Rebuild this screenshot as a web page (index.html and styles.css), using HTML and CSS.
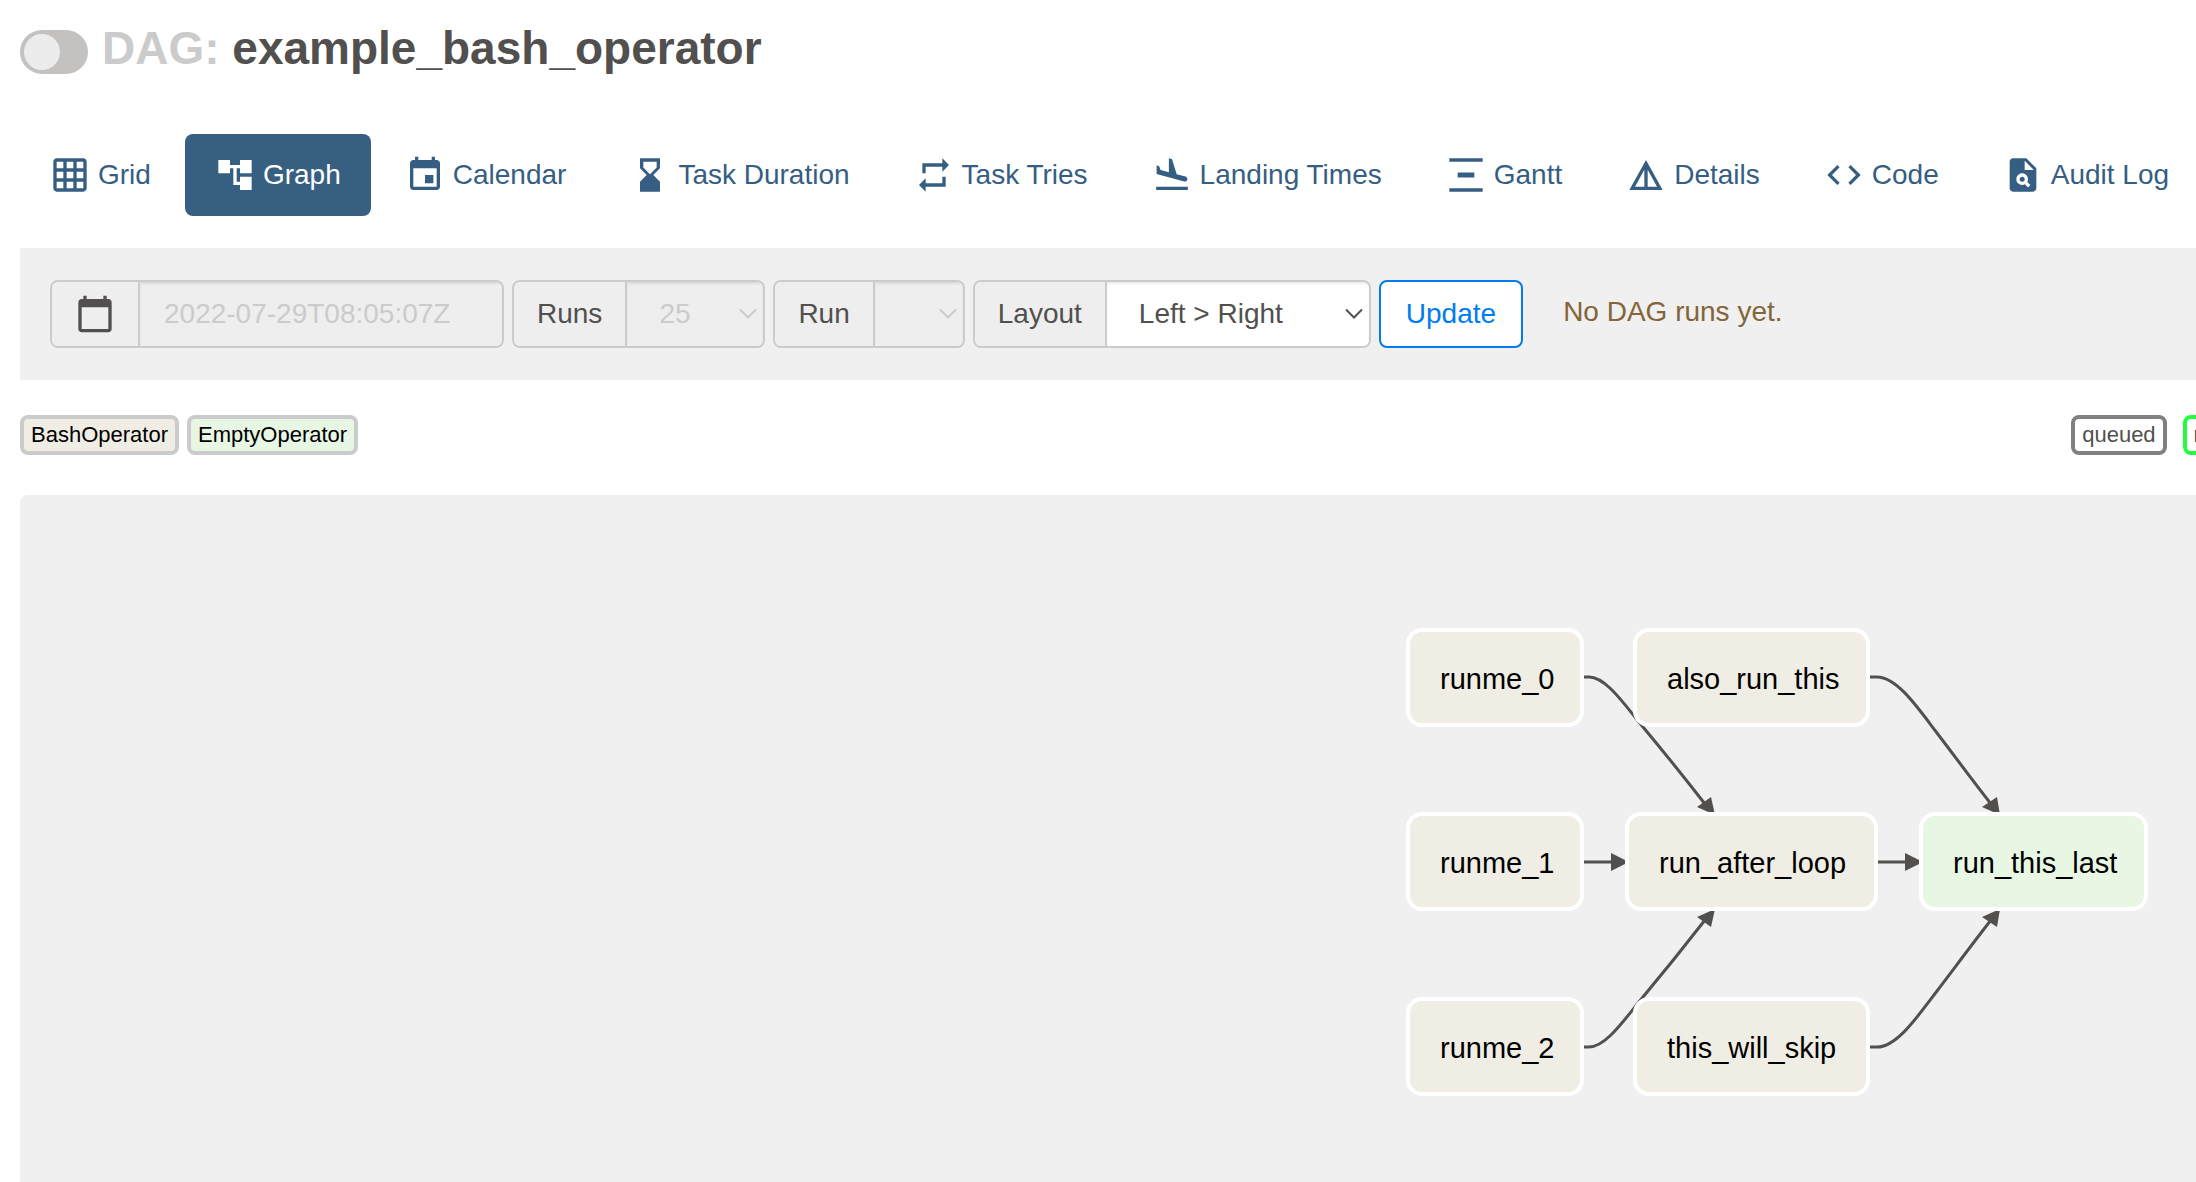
FILE: index.html
```html
<!DOCTYPE html>
<html lang="en">
<head>
<meta charset="utf-8">
<title>example_bash_operator - Graph - Airflow</title>
<link rel="stylesheet" href="styles.css">
</head>
<body>
<main class="page">
  <header class="dag-header">
    <input class="toggle" type="checkbox" id="pause" aria-label="Pause/Unpause DAG">
    <h1 class="dag-title"><span class="dag-title__prefix">DAG:</span> example_bash_operator</h1>
  </header>

  <nav class="tabs">
    <a class="tab" href="#grid"><svg class="icon" viewBox="0 0 24 24"><path d="M20 2H4c-1.1 0-2 .9-2 2v16c0 1.1.9 2 2 2h16c1.1 0 2-.9 2-2V4c0-1.1-.9-2-2-2zM8 20H4v-4h4v4zm0-6H4v-4h4v4zm0-6H4V4h4v4zm6 12h-4v-4h4v4zm0-6h-4v-4h4v4zm0-6h-4V4h4v4zm6 12h-4v-4h4v4zm0-6h-4v-4h4v4zm0-6h-4V4h4v4z"/></svg>Grid</a>
    <a class="tab tab--active" href="#graph"><svg class="icon" viewBox="0 0 24 24"><path d="M22 11V3h-7v3H9V3H2v8h7V8h2v10h4v3h7v-8h-7v3h-2V8h2v3z"/></svg>Graph</a>
    <a class="tab" href="#calendar"><svg class="icon" viewBox="0 0 24 24"><path d="M17 12h-5v5h5v-5zM16 1v2H8V1H6v2H5c-1.11 0-1.99.9-1.99 2L3 19c0 1.1.89 2 2 2h14c1.1 0 2-.9 2-2V5c0-1.1-.9-2-2-2h-1V1h-2zm3 18H5V8h14v11z"/></svg>Calendar</a>
    <a class="tab" href="#duration"><svg class="icon" viewBox="0 0 24 24"><path d="M18 22l-.01-6L14 12l3.99-4.01L18 2H6v6l4 4-4 3.99V22h12zM8 7.5V4h8v3.5l-4 4-4-4z"/></svg>Task Duration</a>
    <a class="tab" href="#tries"><svg class="icon" viewBox="0 0 24 24"><path d="M7 7h10v3l4-4-4-4v3H5v6h2V7zm10 10H7v-3l-4 4 4 4v-3h12v-6h-2v4z"/></svg>Task Tries</a>
    <a class="tab" href="#landing"><svg class="icon" viewBox="0 0 24 24"><path d="M2.5 19h19v2h-19v-2zm16.84-3.15c.8.21 1.62-.26 1.84-1.06.21-.8-.26-1.62-1.06-1.84l-5.31-1.42-2.76-9.02L10.12 2v8.28L5.15 8.95l-.93-2.32-1.45-.39v5.17l16.57 4.44z"/></svg>Landing Times</a>
    <a class="tab" href="#gantt"><svg class="icon" viewBox="0 0 24 24"><path d="M22 2v2H2V2h20zM7 10.5v3h10v-3H7zM2 20v2h20v-2H2z"/></svg>Gantt</a>
    <a class="tab" href="#details"><svg class="icon" viewBox="0 0 24 24"><path fill-rule="evenodd" d="M12 3L2 21h20L12 3zM13 8.92L18.6 19H13V8.92zM11 8.92V19H5.4L11 8.92z"/></svg>Details</a>
    <a class="tab" href="#code"><svg class="icon" viewBox="0 0 24 24"><path d="M9.4 16.6L4.8 12l4.6-4.6L8 6l-6 6 6 6 1.4-1.4zm5.2 0l4.6-4.6-4.6-4.6L16 6l6 6-6 6-1.4-1.4z"/></svg>Code</a>
    <a class="tab" href="#audit"><svg class="icon" viewBox="0 0 24 24"><path fill-rule="evenodd" d="M14 2H6C4.9 2 4 2.9 4 4v16c0 1.1.9 2 2 2h12c1.1 0 2-.9 2-2V8l-6-6zM15.04 19.45l-1.88-1.88c-1.33.71-3.01.53-4.13-.59-1.37-1.37-1.37-3.58 0-4.95s3.58-1.37 4.95 0c1.12 1.12 1.31 2.8.59 4.13l1.88 1.88-1.41 1.41zM13 9V3.500L18.5 9H13z"/><circle cx="11.5" cy="14.5" r="1.500"/></svg>Audit Log</a>
  </nav>

  <form class="toolbar">
    <div class="group">
      <label class="addon" for="base-date" aria-label="Base date"><svg class="icon" viewBox="0 0 24 24"><path d="M20 3h-1V1h-2v2H7V1H5v2H4c-1.1 0-2 .9-2 2v16c0 1.1.9 2 2 2h16c1.100 0 2-.9 2-2V5c0-1.100-.9-2-2-2zm0 18H4V8h16v13z"/></svg></label>
      <input class="control control--date" id="base-date" type="text" value="2022-07-29T08:05:07Z" disabled>
    </div>
    <div class="group">
      <label class="addon" for="runs">Runs</label>
      <select class="control control--select control--runs" id="runs" disabled><option>25</option></select>
    </div>
    <div class="group">
      <label class="addon" for="run">Run</label>
      <select class="control control--select control--run" id="run" disabled><option></option></select>
    </div>
    <div class="group">
      <label class="addon" for="layout">Layout</label>
      <select class="control control--select control--layout" id="layout"><option>Left &gt; Right</option></select>
    </div>
    <button class="update" type="button">Update</button>
    <p class="notice">No DAG runs yet.</p>
  </form>

  <section class="legend">
    <span class="tag tag--bash">BashOperator</span>
    <span class="tag tag--empty">EmptyOperator</span>
    <div class="states">
      <span class="tag tag--queued">queued</span>
      <span class="tag tag--running">running</span>
    </div>
  </section>

  <section class="graph">
    <div class="stage">
      <svg class="edges" viewBox="0 0 742 468">
        <g class="edge">
          <path d="M178 49h5C200 49 218 76 237 99C257 123 278 149 299 176"/>
          <path d="M178 234H208"/>
          <path d="M178 419h5C200 419 218 392 237 369C257 345 278 319 299 292"/>
          <path d="M464 49h7C491 49 512 80 531 105C550 130 567 153 585 176"/>
          <path d="M472 234H502"/>
          <path d="M464 419h7C491 419 512 388 531 363C550 338 567 315 585 292"/>
        </g>
        <g class="arrow">
          <path d="M291 179L305 169L309 187Z"/>
          <path d="M205 225V243L223 234Z"/>
          <path d="M291 289L305 299L309 281Z"/>
          <path d="M576 179L591 169L594 187Z"/>
          <path d="M499 225V243L517 234Z"/>
          <path d="M576 289L591 299L594 281Z"/>
        </g>
      </svg>
      <div class="node" style="left:0;top:0;width:178px">runme_0</div>
      <div class="node" style="left:0;top:184px;width:178px">runme_1</div>
      <div class="node" style="left:0;top:369px;width:178px">runme_2</div>
      <div class="node" style="left:227px;top:0;width:237px">also_run_this</div>
      <div class="node" style="left:219px;top:184px;width:253px">run_after_loop</div>
      <div class="node" style="left:227px;top:369px;width:237px">this_will_skip</div>
      <div class="node node--empty" style="left:513px;top:184px;width:229px">run_this_last</div>
    </div>
  </section>
</main>
</body>
</html>
```
FILE: styles.css
```css
* {
  box-sizing: border-box;
}

body {
  margin: 0;
  background: #fff;
  color: #51504f;
  font: 28px/40px "Liberation Sans", Arial, sans-serif;
  overflow-x: hidden;
}

.page {
  display: flex;
  flex-direction: column;
  min-height: 100vh;
  padding-left: 20px;
}

.dag-header {
  display: flex;
  align-items: center;
  gap: 14px;
  height: 134px;
  padding-bottom: 30px;
}

.toggle {
  appearance: none;
  flex: none;
  width: 68px;
  height: 44px;
  margin: 0;
  padding: 4px;
  border-radius: 22px;
  background: #c4c2c1;
}

.toggle::before {
  content: "";
  display: block;
  width: 36px;
  height: 36px;
  border-radius: 50%;
  background: #edecec;
}

.dag-title {
  margin: 0;
  padding-bottom: 8px;
  font-size: 46px;
  line-height: 56px;
}

.dag-title__prefix {
  color: #cbcbcb;
}

.tabs {
  display: flex;
  gap: 4px;
}

.tab {
  display: flex;
  flex: none;
  align-items: center;
  gap: 8px;
  height: 82px;
  padding: 0 30px;
  border-radius: 8px;
  color: #355e82;
  text-decoration: none;
  white-space: nowrap;
}

.tab--active {
  background: #375f82;
  color: #fff;
}

.icon {
  display: block;
  flex: none;
  width: 40px;
  height: 40px;
  fill: currentColor;
}

.toolbar {
  display: flex;
  align-items: center;
  gap: 8px;
  margin-top: 32px;
  padding: 32px 30px;
  background: #f0f0f0;
}

.group {
  display: flex;
  height: 68px;
  border: 2px solid #cbcbcb;
  border-radius: 8px;
  overflow: hidden;
}

.addon {
  display: flex;
  align-items: center;
  padding: 0 23px;
  border-right: 2px solid #cbcbcb;
  background: #eee;
}

.control {
  appearance: none;
  height: 64px;
  margin: 0;
  padding: 0 24px;
  border: 0;
  border-radius: 0;
  background: #fff;
  box-shadow: inset 0 2px 2px rgba(0, 0, 0, 0.075);
  color: #51504f;
  font: inherit;
  opacity: 1;
}

.control:disabled {
  background-color: #eee;
  color: #cbcbcb;
}

.control--date {
  width: 362px;
}

.control--select {
  padding: 0 32px;
  background-image: url("data:image/svg+xml,%3Csvg xmlns='http://www.w3.org/2000/svg' width='18' height='12'%3E%3Cpath d='M1 1.500L9 9.500L17 1.500' fill='none' stroke='%2351504f' stroke-width='2'/%3E%3C/svg%3E");
  background-position: right 6px center;
  background-repeat: no-repeat;
}

.control--select:disabled {
  background-image: url("data:image/svg+xml,%3Csvg xmlns='http://www.w3.org/2000/svg' width='18' height='12'%3E%3Cpath d='M1 1.500L9 9.500L17 1.500' fill='none' stroke='%23cbcbcb' stroke-width='2'/%3E%3C/svg%3E");
}

.control--runs {
  width: 136px;
}

.control--run {
  width: 88px;
}

.control--layout {
  width: 262px;
}

.update {
  height: 68px;
  padding: 0 25px;
  border: 2px solid #017cee;
  border-radius: 8px;
  background: #fff;
  color: #017cee;
  font: inherit;
}

.notice {
  margin: 0 0 4px 32px;
  color: #836539;
}

.legend {
  display: flex;
  gap: 8px;
  margin: 35px 0 40px;
}

.states {
  display: flex;
  gap: 16px;
  margin-left: auto;
  margin-right: -82px;
}

.tag {
  height: 40px;
  padding: 0 7px;
  border: 4px solid #cbcbcb;
  border-radius: 8px;
  font-size: 22px;
  line-height: 32px;
}

.tag--bash {
  background: #f0ede4;
  color: #000;
}

.tag--empty {
  background: #e8f7e4;
  color: #000;
}

.tag--queued {
  border-color: #808080;
}

.tag--running {
  border-color: #20ff3c;
}

.graph {
  flex: 1;
  padding: 133px 48px 86px 1386px;
  border-radius: 8px 0 0 0;
  background: #f0f0f0;
}

.stage {
  position: relative;
  width: 742px;
  height: 468px;
}

.edges {
  position: absolute;
  inset: 0;
  width: 100%;
  height: 100%;
}

.edge {
  fill: none;
  stroke: #51504f;
  stroke-width: 3;
}

.arrow {
  fill: #51504f;
}

.node {
  position: absolute;
  display: flex;
  align-items: center;
  height: 99px;
  padding: 3px 0 0 30px;
  border: 4px solid #fff;
  border-radius: 16px;
  background: #f0ede4;
  color: #000;
  font-size: 29px;
}

.node--empty {
  background: #e8f7e4;
}
```
